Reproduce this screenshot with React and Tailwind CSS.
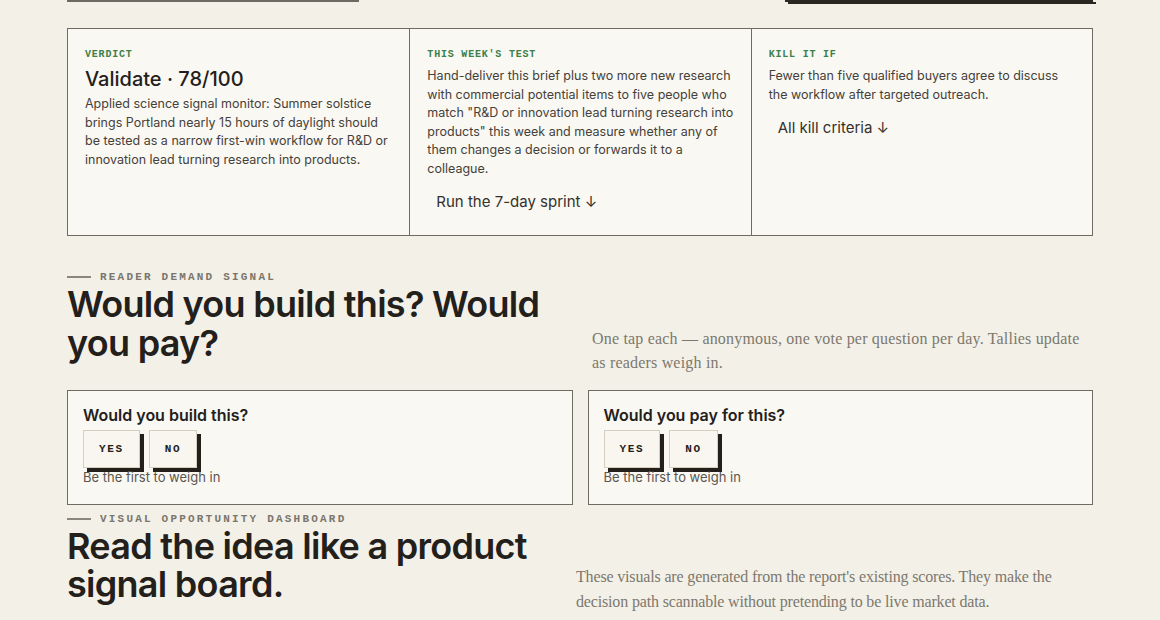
const sans = "font-['Inter',sans-serif]";
const mono = "font-['Liberation_Mono',monospace]";
const serif = "font-['Liberation_Serif',serif]";

const cards = [
  {
    label: "Verdict",
    title: "Validate · 78/100",
    body: "Applied science signal monitor: Summer solstice brings Portland nearly 15 hours of daylight should be tested as a narrow first-win workflow for R&D or innovation lead turning research into products.",
  },
  {
    label: "This week's test",
    body: "Hand-deliver this brief plus two more new research with commercial potential items to five people who match \"R&D or innovation lead turning research into products\" this week and measure whether any of them changes a decision or forwards it to a colleague.",
    link: "Run the 7-day sprint ↓",
  },
  {
    label: "Kill it if",
    body: "Fewer than five qualified buyers agree to discuss the workflow after targeted outreach.",
    link: "All kill criteria ↓",
  },
];

const polls = ["Would you build this?", "Would you pay for this?"];

function Eyebrow({ children }) {
  return (
    <div className="flex items-center gap-[9px]">
      <span className="h-[2px] w-6 bg-[#8a867c]" />
      <span className={`${mono} text-[11px] font-bold uppercase leading-4 tracking-[0.2em] text-[#7a766c]`}>
        {children}
      </span>
    </div>
  );
}

function SummaryCard({ label, title, body, link, first }) {
  return (
    <div className={`px-[17px] pt-[19px] pb-[18px] ${first ? "" : "border-l border-[#6e6b63]"}`}>
      <p className={`${mono} text-[10px] font-bold uppercase leading-[14px] tracking-[0.08em] text-[#3d8048]`}>{label}</p>
      {title && <h3 className={`${sans} mt-1 text-[20px] font-medium leading-[26px] text-[#23201b]`}>{title}</h3>}
      <p className={`${sans} ${title ? "mt-[3px]" : "mt-[5px]"} text-[12.5px] leading-[18.5px] text-[#45413a]`}>{body}</p>
      {link && (
        <a className={`${sans} mt-[9px] inline-block px-[9px] py-[5px] text-[15px] leading-5 text-[#34312b]`}>{link}</a>
      )}
    </div>
  );
}

function VoteButton({ children }) {
  return (
    <button className={`${mono} border border-[#d6cfbf] bg-[#f8f6ef] px-[15px] py-[10px] text-[11px] font-bold leading-4 tracking-[0.15em] text-[#23201b] shadow-[4px_4px_0_#23201b]`}>
      {children}
    </button>
  );
}

function PollCard({ question }) {
  return (
    <div className="border border-[#6e6b63] bg-[#faf8f3] px-[15px] pt-[13px] pb-[18px]">
      <h4 className={`${sans} text-[16px] font-semibold leading-[22px] text-[#23201b]`}>{question}</h4>
      <div className="mt-1 flex gap-[9px]">
        <VoteButton>YES</VoteButton>
        <VoteButton>NO</VoteButton>
      </div>
      <p className={`${sans} text-[13px] leading-[18px] text-[#5a564e]`}>Be the first to weigh in</p>
    </div>
  );
}

export default function App() {
  return (
    <div className="min-h-screen bg-[#f3f0e8]">
      <div className="mx-auto w-[1026px]">
        {/* tail end of the controls above the fold */}
        <div className="flex justify-between">
          <div className="h-[2px] w-[292px] bg-[#6d6a63]" />
          <div className="h-[2px] w-[308px] bg-[#2a2722] shadow-[3px_2px_0_#2a2722]" />
        </div>

        <div className="mt-[26px] grid grid-cols-3 border border-[#6e6b63] bg-[#faf8f3]">
          {cards.map((c, i) => (
            <SummaryCard key={c.label} {...c} first={i === 0} />
          ))}
        </div>

        <section className="mt-[33px]">
          <div className="grid grid-cols-[1fr_501px] items-end gap-x-6">
            <div className="pb-3">
              <Eyebrow>Reader demand signal</Eyebrow>
              <h2 className={`${sans} text-[36px] font-semibold leading-[39px] tracking-[-0.02em] text-[#23201b]`}>
                Would you build this? Would you pay?
              </h2>
            </div>
            <p className={`${serif} text-[16px] leading-6 tracking-[0.012em] text-[#7d786d]`}>
              One tap each — anonymous, one vote per question per day. Tallies update as readers weigh in.
            </p>
          </div>
          <div className="mt-[15px] grid grid-cols-2 gap-[15px]">
            {polls.map((q) => (
              <PollCard key={q} question={q} />
            ))}
          </div>
        </section>

        <section className="mt-[6px]">
          <div className="grid grid-cols-[1fr_517px] items-end gap-x-6">
            <div className="pb-[11px]">
              <Eyebrow>Visual opportunity dashboard</Eyebrow>
              <h2 className={`${sans} text-[36px] font-semibold leading-[38px] tracking-[-0.02em] text-[#23201b]`}>
                Read the idea like a product signal board.
              </h2>
            </div>
            <p className={`${serif} text-[16px] leading-[25px] tracking-[-0.01em] text-[#7d786d]`}>
              These visuals are generated from the report's existing scores. They make the decision path scannable without pretending to be live market data.
            </p>
          </div>
        </section>
      </div>
    </div>
  );
}
